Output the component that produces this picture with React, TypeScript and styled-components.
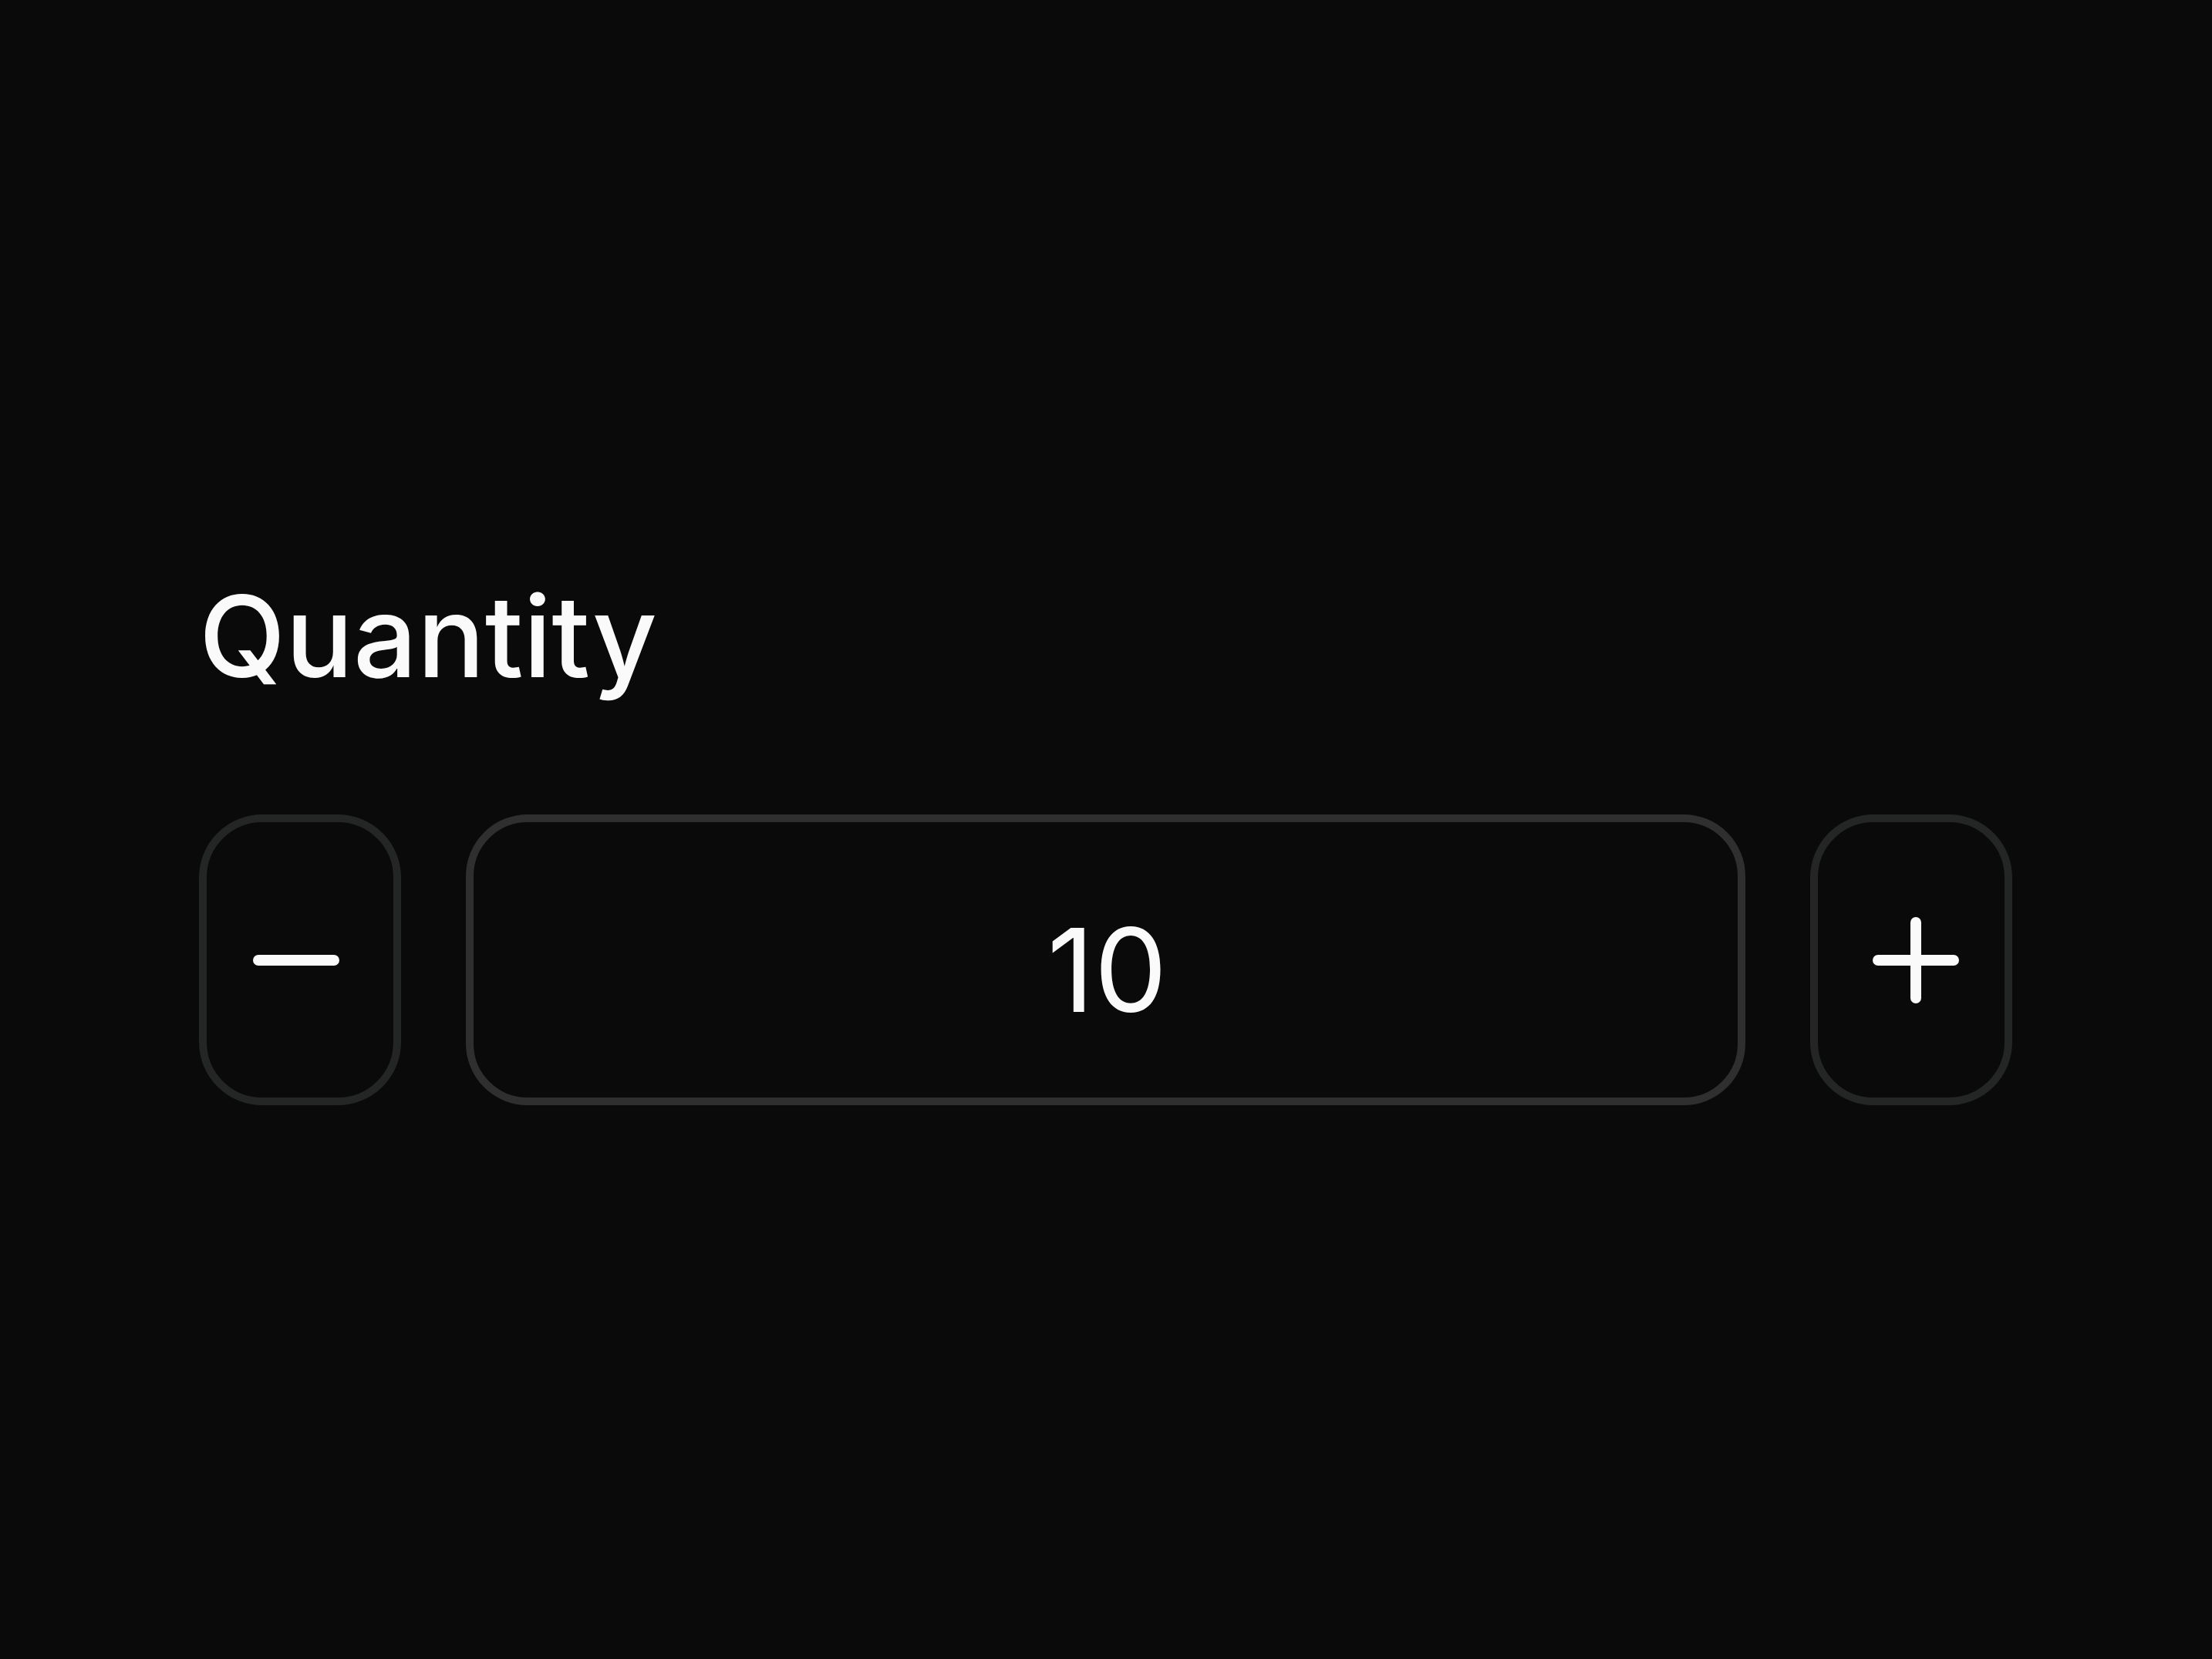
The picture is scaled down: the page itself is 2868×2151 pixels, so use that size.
import React, { useState } from "react";
import styled, { createGlobalStyle } from "styled-components";
import { Minus, Plus } from "lucide-react";

const GlobalStyle = createGlobalStyle`
  html, body {
    margin: 0;
    padding: 0;
    background: #0a0a0a;
  }
  body {
    font-family: Inter, "Noto Sans", "Liberation Sans", sans-serif;
    color: #fafafa;
  }
`;

const Page = styled.div`
  min-height: 2151px;
  padding: 752px 0 0 258px;
  box-sizing: border-box;
`;

const Field = styled.div`
  width: 2351px;
  display: flex;
  flex-direction: column;
  gap: 158px;
`;

const Label = styled.label`
  font-size: 146px;
  line-height: 1;
  font-weight: 500;
  color: #fafafa;
  letter-spacing: 0;
`;

const Row = styled.div`
  display: flex;
  align-items: stretch;
  gap: 84px;
  height: 377px;
`;

const StepButton = styled.button`
  width: 262px;
  flex: 0 0 262px;
  box-sizing: border-box;
  border: 10.5px solid #242626;
  border-radius: 82px;
  background: #0a0a0a;
  color: #fafafa;
  display: flex;
  align-items: center;
  justify-content: center;
  padding: 0;
  cursor: pointer;
`;

const IconWrap = styled.span<{ $shift: number }>`
  display: flex;
  transform: translateX(${(p) => p.$shift}px);
`;

const ValueInput = styled.input`
  flex: 1;
  min-width: 0;
  box-sizing: border-box;
  border: 10.5px solid #2f2f2f;
  border-radius: 80px;
  background: #0a0a0a;
  color: #fafafa;
  font-family: Inter, "Noto Sans", "Liberation Sans", sans-serif;
  font-size: 150px;
  font-weight: 400;
  text-align: center;
  padding: 26px 0 0 4px;
  outline: none;
`;

export default function App() {
  const [qty, setQty] = useState(10);
  return (
    <>
      <GlobalStyle />
      <Page>
        <Field>
          <Label htmlFor="qty">Quantity</Label>
          <Row>
            <StepButton aria-label="Decrease" onClick={() => setQty((q) => q - 1)}>
              <IconWrap $shift={-5}>
                <Minus size={168} strokeWidth={2} />
              </IconWrap>
            </StepButton>
            <ValueInput
              id="qty"
              value={qty}
              onChange={(e) => setQty(Number(e.target.value) || 0)}
            />
            <StepButton aria-label="Increase" onClick={() => setQty((q) => q + 1)}>
              <IconWrap $shift={6}>
                <Plus size={168} strokeWidth={2} />
              </IconWrap>
            </StepButton>
          </Row>
        </Field>
      </Page>
    </>
  );
}
